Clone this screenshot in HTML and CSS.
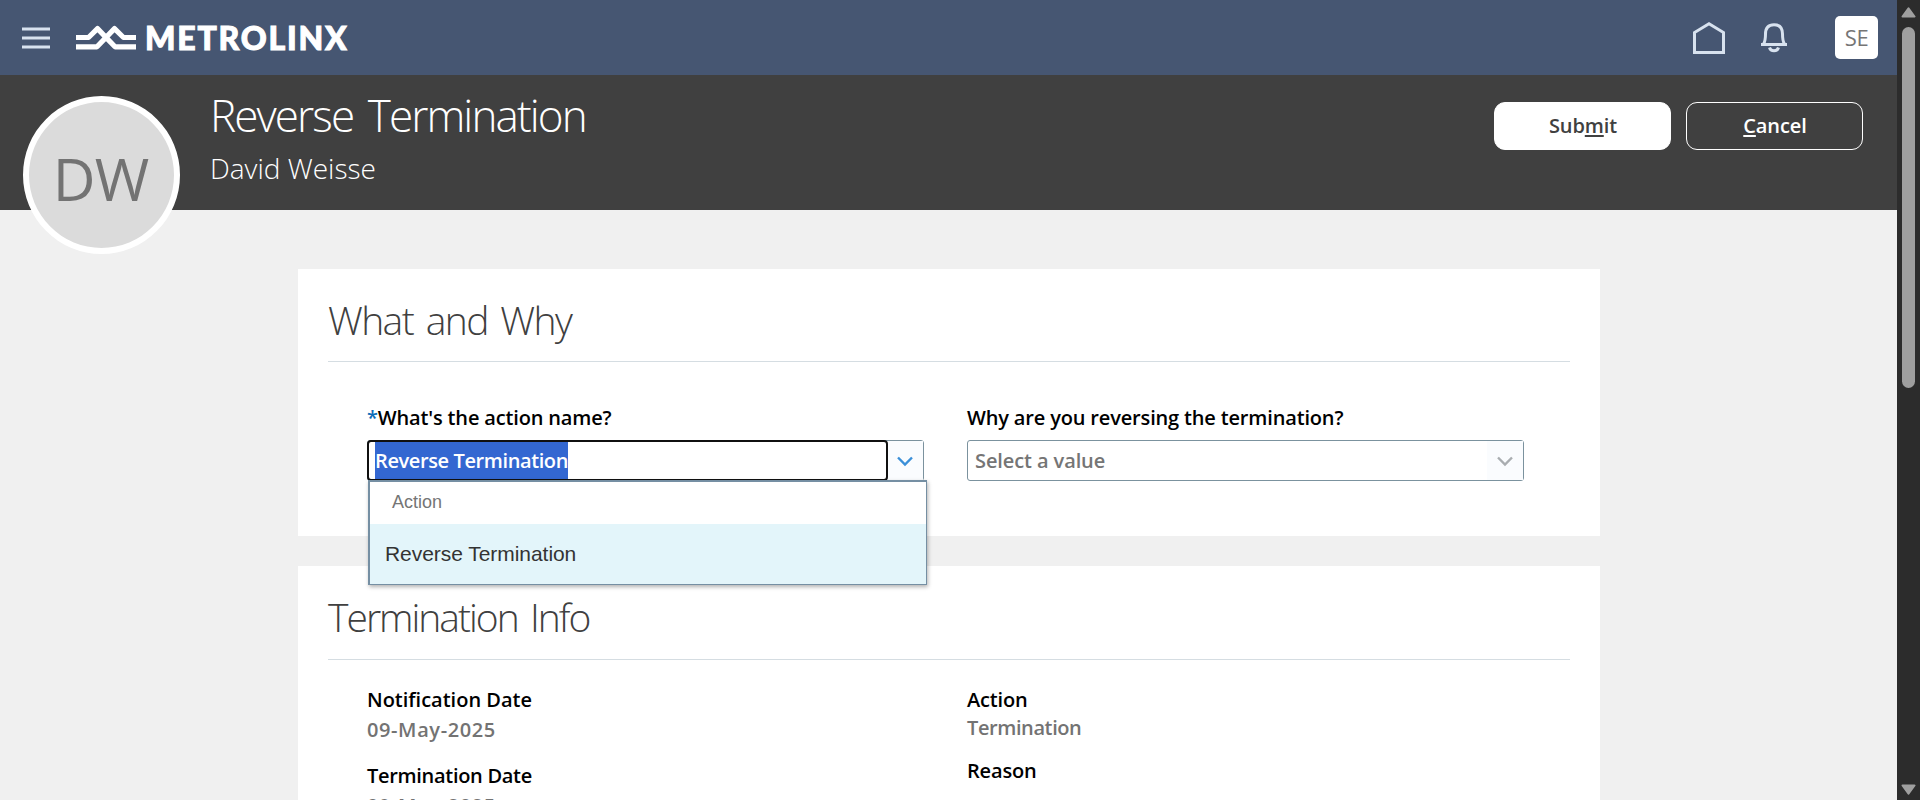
FILE: index.html
```html
<!DOCTYPE html>
<html lang="en">
<head>
<meta charset="utf-8">
<title>Reverse Termination</title>
<link rel="stylesheet" href="styles.css">
</head>
<body>
<div class="window">
  <div class="page">
    <header class="topbar">
      <svg class="menu-icon" width="28" height="22" viewBox="0 0 28 22" stroke="#d8e2ef" stroke-width="3"><path d="M0 2H28M0 11H28M0 20H28"/></svg>
      <div class="brand">
        <svg class="brand-mark" width="60" height="26" viewBox="0 0 60 26" fill="none" stroke="#fff" stroke-width="5.2" stroke-linejoin="round"><path d="M0 12.500H12.500L21.500 3.600L39 21.800H60"/><path d="M0 21.800H21L38.500 3.600L47.500 12.500H60"/></svg>
        <span class="brand-name">METROLINX</span>
      </div>
      <nav class="tools">
        <svg class="home-icon" width="32" height="32" viewBox="0 0 32 32" fill="none" stroke="#d8e2ef" stroke-width="3"><path d="M1.5 30.5V10.5L16 1.8L30.5 10.5V30.5Z"/></svg>
        <svg class="bell-icon" width="26" height="30" viewBox="0 0 26 30" fill="none" stroke="#d8e2ef" stroke-width="3"><path d="M0 21.5H26"/><path d="M2.5 21Q4.5 18 4.5 11Q4.5 1.7 13 1.7Q21.500 1.700 21.500 11Q21.500 18 23.500 21"/><path d="M8.500 24.500Q9.500 27.800 13 27.800Q16.500 27.800 17.500 24.500"/></svg>
        <span class="user">SE</span>
      </nav>
    </header>
    <section class="banner">
      <div class="avatar"><span class="initials">DW</span></div>
      <div class="heading">
        <h1 class="title">Reverse Termination</h1>
        <p class="person">David Weisse</p>
      </div>
      <div class="actions">
        <button class="btn btn-primary">Sub<u>m</u>it</button>
        <button class="btn btn-outline"><u>C</u>ancel</button>
      </div>
    </section>
    <main class="content">
      <section class="card card-form">
        <h2 class="card-title">What and Why</h2>
        <div class="form">
          <div class="field">
            <label class="label"><span class="required">*</span>What's the action name?</label>
            <div class="combo">
              <div class="combo-input focused"><span class="selected">Reverse Termination</span></div>
              <div class="combo-button"><svg width="16" height="11" viewBox="0 0 16 11" fill="none" stroke="#3a8fd8" stroke-width="2.4"><path d="M1 1.500L8 8.500L15 1.500"/></svg></div>
            </div>
            <div class="menu">
              <div class="menu-head">Action</div>
              <div class="menu-item">Reverse Termination</div>
            </div>
          </div>
          <div class="field">
            <label class="label">Why are you reversing the termination?</label>
            <div class="combo">
              <div class="combo-input"><span class="placeholder">Select a value</span></div>
              <div class="combo-button"><svg width="16" height="11" viewBox="0 0 16 11" fill="none" stroke="#a9adb0" stroke-width="2.4"><path d="M1 1.500L8 8.500L15 1.500"/></svg></div>
            </div>
          </div>
        </div>
      </section>
      <section class="card card-info">
        <h2 class="card-title">Termination Info</h2>
        <div class="details">
          <dl class="col">
            <dt class="label label-notice">Notification Date</dt><dd class="value value-date">09-May-2025</dd>
            <dt class="label label-end">Termination Date</dt><dd class="value value-date">09-May-2025</dd>
          </dl>
          <dl class="col col-tight">
            <dt class="label">Action</dt><dd class="value">Termination</dd>
            <dt class="label">Reason</dt>
          </dl>
        </div>
      </section>
    </main>
  </div>
  <aside class="scrollbar">
    <svg width="15" height="11" viewBox="0 0 15 11" fill="#9f9f9f" stroke="#9f9f9f" stroke-width="2" stroke-linejoin="round"><path d="M1.500 9.500L7.500 1.300L13.500 9.500Z"/></svg>
    <div class="thumb"></div>
    <svg class="arrow-down" width="15" height="11" viewBox="0 0 15 11" fill="#9f9f9f" stroke="#9f9f9f" stroke-width="2" stroke-linejoin="round"><path d="M1.500 1.500L7.500 9.700L13.500 1.500Z"/></svg>
  </aside>
</div>
</body>
</html>
```

FILE: styles.css
```css
* { box-sizing: border-box; }
body { margin: 0; overflow: hidden; font-family: "Open Sans", "Noto Sans", sans-serif; }
h1, h2, p, dl, dd { margin: 0; }
svg { display: block; }

.window { display: flex; width: 1920px; height: 800px; overflow: hidden; }
.page { width: 1897px; height: 800px; overflow: hidden; background: #f0f0f0; }

.topbar { display: flex; align-items: center; height: 75px; padding: 0 19px 0 22px; background: #465672; }
.brand { display: flex; align-items: center; gap: 9px; margin-left: 26px; }
.brand-name { font: 900 32px/40px Lato, sans-serif; color: #fff; letter-spacing: 1.8px; -webkit-text-stroke: 1px #fff; white-space: nowrap; }
.tools { display: flex; align-items: center; margin-left: auto; }
.bell-icon { margin-left: 36px; }
.user { width: 43px; height: 43px; margin-left: 48px; border-radius: 5px; background: #fff; color: #757575; font-size: 22px; line-height: 43px; text-align: center; letter-spacing: -0.3px; }

.banner { display: flex; align-items: flex-start; height: 135px; padding: 0 34px 0 23px; background: #404040; color: #fff; }
.avatar { position: relative; flex: none; display: flex; align-items: center; justify-content: center; width: 157px; height: 158px; margin-top: 21px; border: 6px solid #fff; border-radius: 50%; background: #dbdbdb; }
.initials { color: #737373; font-size: 59px; line-height: 80px; letter-spacing: -1px; margin: 5px 2px 0 0; }
.heading { margin: 13px 0 0 30px; }
.title { font-size: 44px; line-height: 54px; font-weight: 300; letter-spacing: -1.9px; word-spacing: 5px; white-space: nowrap; }
.person { margin-top: 6px; font-size: 28px; line-height: 40px; font-weight: 300; white-space: nowrap; }
.actions { display: flex; gap: 15px; margin: 27px 0 0 auto; }
.btn { width: 177px; height: 48px; padding: 0 0 1px 1px; border: 1px solid #fff; border-radius: 11px; font: 600 20px/28px "Open Sans", sans-serif; letter-spacing: -0.1px; }
.btn u { text-decoration-thickness: 2px; text-underline-offset: 2px; text-decoration-skip-ink: none; }
.btn-primary { background: #fff; color: #404040; }
.btn-outline { background: transparent; color: #fff; }

.content { display: flex; flex-direction: column; gap: 30px; padding: 59px 297px 0 298px; }
.card { padding: 26px 30px 0; background: #fff; }
.card-form { height: 267px; }
.card-info { height: 300px; }
.card-title { height: 67px; border-bottom: 1px solid #d5dde2; color: #404040; font-size: 39px; line-height: 50px; font-weight: 300; letter-spacing: -1.6px; word-spacing: 4px; white-space: nowrap; }
.card-info .card-title { height: 68px; letter-spacing: -2px; }
.form, .details { display: grid; grid-template-columns: 557px 557px; column-gap: 43px; padding-left: 39px; }
.form { padding-top: 42px; }
.details { padding-top: 26px; }

.field { position: relative; }
.label { display: block; font-size: 20px; line-height: 28px; font-weight: 600; letter-spacing: -0.16px; color: #000; white-space: nowrap; }
.label-notice { letter-spacing: 0; }
.label-end { letter-spacing: -0.3px; }
.required { color: #0b6cb8; }
.value { font-size: 20px; line-height: 28px; font-weight: 600; letter-spacing: -0.4px; color: #737373; margin: 2px 0 18px; }
.value-date { letter-spacing: 0.6px; }
.col-tight .value { margin: 0 0 15px; }

.combo { display: flex; height: 41px; margin-top: 8px; border: 1px solid #7b929e; border-radius: 3px; font-size: 20px; font-weight: 600; }
.combo-input { flex: 1; padding-left: 7px; line-height: 40px; white-space: nowrap; }
.combo-input.focused { margin: -1px 0 -1px -1px; padding-left: 6px; border: 2px solid #101010; border-radius: 4px; line-height: 38px; }
.combo-button { display: flex; align-items: center; justify-content: center; width: 36px; background: #fafcfe; padding-top: 2px; }
.focused + .combo-button { width: 35px; padding-right: 1px; }
.selected { display: inline-block; height: 37px; background: #3367d1; color: #fff; letter-spacing: -0.39px; }
.placeholder { color: #757575; letter-spacing: -0.1px; }

.menu { position: absolute; left: 1px; top: 76px; width: 559px; height: 105px; border: 2px solid #758fa3; border-width: 2px 1px 1px 2px; background: #fff; box-shadow: 1px 2px 4px rgba(0, 0, 0, 0.3); font-family: "Liberation Sans", Arial, sans-serif; }
.menu-head { height: 42px; padding-left: 22px; font-size: 18px; line-height: 40px; color: #757575; }
.menu-item { height: 60px; padding-left: 15px; background: #e3f5fa; font-size: 21px; line-height: 59px; letter-spacing: -0.05px; color: #333; }

.scrollbar { display: flex; flex-direction: column; align-items: center; width: 23px; height: 800px; padding: 7px 0 5px; background: #2c2c2c; }
.thumb { width: 13px; height: 361px; margin-top: 9px; border-radius: 7px; background: #9f9f9f; }
.arrow-down { margin-top: auto; }
```
